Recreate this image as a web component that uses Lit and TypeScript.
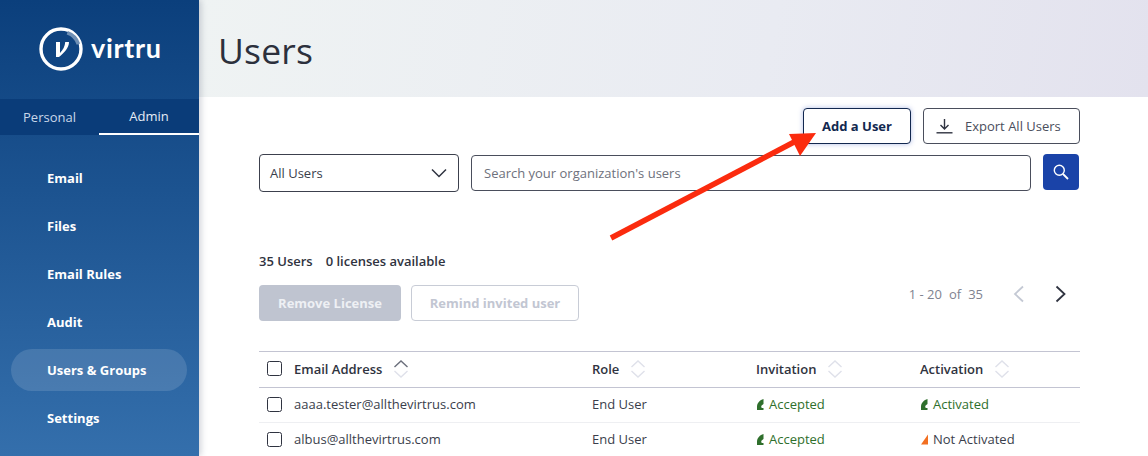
import { LitElement, html, css, svg } from "lit";
import { customElement } from "lit/decorators.js";

const sortIcon = (active = false) => html`<svg class="sort" width="16" height="20" viewBox="0 0 16 20" fill="none">
  <path d="M1.5 8 L8 2 L14.5 8" stroke="${active ? "#6b6f7c" : "#dfe1ea"}" stroke-width="1.4"/>
  <path d="M1.5 12 L8 18 L14.5 12" stroke="#dfe1ea" stroke-width="1.4"/>
</svg>`;

const leaf = html`<svg class="st" width="7" height="11" viewBox="0 0 7 11"><path d="M6.5 0 C3 1 0.3 3.5 0 7.5 L0 11 L6.5 11 L6.5 9 C4.6 9.5 3.6 8 4.6 6.4 L6.5 5 Z" fill="#2f6f2c"/></svg>`;
const warn = html`<svg class="st" width="7" height="11" viewBox="0 0 7 11"><path d="M7 0.5 L7 10.5 L0 10.5 Z" fill="#f26f21"/></svg>`;

const nav = ["Email", "Files", "Email Rules", "Audit", "Users & Groups", "Settings"];
const rows = [
  { email: "aaaa.tester@allthevirtrus.com", ok: true, act: "Activated" },
  { email: "albus@allthevirtrus.com", ok: false, act: "Not Activated" },
];

@customElement("app-root")
export class AppRoot extends LitElement {
  static styles = css`
    :host { display: block; width: 1148px; height: 456px; overflow: hidden; position: relative; background: #fff;
      font-family: "Open Sans", "Noto Sans", sans-serif; color: #2f3340; font-size: 13px; }
    * { box-sizing: border-box; }
    .app { display: flex; height: 456px; }
    .side { width: 199px; flex: none; height: 100%; display: flex; flex-direction: column; color: #fff; position: relative; z-index: 2;
      background: linear-gradient(180deg, #0b3f7c 0%, #346fac 100%); box-shadow: 2px 0 6px rgba(40,50,80,.22); }
    .logo { height: 99px; display: flex; align-items: center; padding: 0 0 1px 39px; gap: 8px; }
    .word { font-family: "Lato", sans-serif; font-weight: 700; font-size: 27px; letter-spacing: .7px; line-height: 1; margin-top: -3px; }
    .tabs { display: flex; height: 36px; background: #0a3c79; }
    .tab { flex: 1; display: flex; align-items: center; justify-content: center; font-size: 13px; color: #c9d8ea; padding-bottom: 1px; }
    .tab.on { color: #e6edf6; border-bottom: 2px solid #fff; }
    .tab:first-child { flex: 0 0 99px; }
    .nav { display: flex; flex-direction: column; padding: 22px 12px 0 11px; gap: 6px; }
    .item { height: 42px; border-radius: 21px; padding-left: 36px; display: flex; align-items: center; font-weight: 700; font-size: 13px; color: #fff; }
    .item.on { background: rgba(255,255,255,.13); }
    .main { flex: 1; min-width: 0; display: flex; flex-direction: column; }
    .head { height: 97px; flex: none; padding: 4px 0 0 19px; display: flex; align-items: center;
      background: linear-gradient(100deg, #eff3f3 0%, #e9ebf2 60%, #e3e2ee 100%); }
    h1 { margin: 0; font-weight: 400; font-size: 35.5px; color: #2c303c; line-height: 1; letter-spacing: .2px; }
    .body { padding: 11px 68px 0 60px; display: flex; flex-direction: column; }
    .actions { display: flex; justify-content: flex-end; gap: 12px; }
    .btn { height: 36px; border-radius: 4px; display: flex; align-items: center; justify-content: center; font-size: 13px; background: #fff; }
    .add { width: 108px; border: 1px solid #12284f; font-weight: 700; color: #12284f; box-shadow: 0 0 5px rgba(60,90,190,.4); }
    .export { width: 157px; border: 1px solid #4a4e5c; color: #4a4e5c; gap: 12px; justify-content: flex-start; padding-left: 12px; }
    .filters { display: flex; margin-top: 10px; align-items: flex-start; }
    .select { width: 200px; height: 38px; border: 1px solid #3c404d; border-radius: 4px; padding: 0 11px 0 10px; display: flex; align-items: center; justify-content: space-between; color: #3a3e4b; }
    .input { width: 560px; height: 36px; margin: 1px 0 0 12px; border: 1px solid #4a4e5c; border-radius: 4px; padding: 0 12px; display: flex; align-items: center; color: #6e717c; }
    .go { width: 36px; height: 36px; margin-left: 12px; background: #1a43a8; border-radius: 4px; display: flex; align-items: center; justify-content: center; }
    .stats { margin-top: 60px; height: 18px; line-height: 18px; display: flex; gap: 13px; font-weight: 600; font-size: 13px; color: #2f3340; }
    .bar { display: flex; justify-content: space-between; margin-top: 15px; }
    .bulk { display: flex; gap: 10px; }
    .rm { width: 142px; background: #bfc4d0; color: #eef0f4; font-weight: 700; }
    .remind { width: 168px; border: 1px solid #c8ccd6; color: #c2c6d2; font-weight: 700; }
    .pager { display: flex; align-items: flex-start; height: 20px; margin-right: 13px; color: #808390; font-size: 13px; }
    .count { margin-right: 30px; line-height: 18px; display: flex; gap: 7px; }
    .pager svg + svg { margin-left: 30px; }
    .table { margin-top: 30px; width: 821px; border-top: 1px solid #c3c4d2; }
    .row { display: grid; grid-template-columns: 35px 298px 164px 164px 1fr; align-items: center; height: 35px; padding-bottom: 2px; border-bottom: 1px solid #eeeff2; color: #3a3e4b; }
    .row.th { height: 36px; border-bottom: 1px solid #c3c4d2; font-weight: 600; color: #2f3340; }
    .cb { width: 15px; height: 15px; border: 1.5px solid #2f3340; border-radius: 2.5px; margin-left: 8px; }
    .h { display: flex; align-items: center; gap: 11px; }
    .s { display: flex; align-items: center; gap: 5px; padding-left: 1px; }
    .s.g { color: #2f6f2c; }
    .arrow { position: absolute; left: 0; top: 0; z-index: 3; pointer-events: none; }
  `;

  render() {
    return html`
      <div class="app">
        <aside class="side">
          <div class="logo">
            <svg width="44" height="44" viewBox="0 0 44 44" fill="none">
              <circle cx="22" cy="22" r="20" stroke="#fff" stroke-width="3.4"/>
              <path d="M28.5 6.2 A18 18 0 0 1 39.6 17.5" stroke="#6f8fb4" stroke-width="3.6" transform="translate(-.2 -.4)"/>
              <path d="M17 15 L17 30 L20 30 C25 26 30 21 30 15 L26.2 15 C26 19 24 23 21 26 L21 15 Z" fill="#fff"/>
            </svg>
            <span class="word">virtru</span>
          </div>
          <div class="tabs"><div class="tab">Personal</div><div class="tab on">Admin</div></div>
          <nav class="nav">
            ${nav.map((n) => html`<div class="item ${n === "Users & Groups" ? "on" : ""}">${n}</div>`)}
          </nav>
        </aside>
        <main class="main">
          <header class="head"><h1>Users</h1></header>
          <section class="body">
            <div class="actions">
              <div class="btn add">Add a User</div>
              <div class="btn export">
                <svg width="17" height="16" viewBox="0 0 17 16" fill="none" stroke="#2f3340" stroke-width="1.4">
                  <path d="M8.5 1 V10.5 M4.5 7 L8.5 11 L12.5 7"/><path d="M0.5 14.8 H16.5"/>
                </svg>
                <span>Export All Users</span>
              </div>
            </div>
            <div class="filters">
              <div class="select"><span>All Users</span>
                <svg width="16" height="10" viewBox="0 0 16 10" fill="none" stroke="#2f3340" stroke-width="1.5"><path d="M1 1.5 L8 8.5 L15 1.5"/></svg>
              </div>
              <div class="input">Search your organization's users</div>
              <div class="go">
                <svg width="16" height="16" viewBox="0 0 16 16" fill="none" stroke="#fff" stroke-width="1.4"><circle cx="6.3" cy="6.3" r="5"/><path d="M10 10 L15 15" stroke-width="1.8"/></svg>
              </div>
            </div>
            <div class="stats"><span>35 Users</span><span>0 licenses available</span></div>
            <div class="bar">
              <div class="bulk">
                <div class="btn rm">Remove License</div>
                <div class="btn remind">Remind invited user</div>
              </div>
              <div class="pager">
                <span class="count"><span>1 - 20</span><span>of</span><span>35</span></span>
                <svg width="12" height="18" viewBox="0 0 12 18" fill="none" stroke="#c4c9d4" stroke-width="1.8"><path d="M10 1.5 L2 9 L10 16.5"/></svg>
                <svg width="12" height="18" viewBox="0 0 12 18" fill="none" stroke="#2f3340" stroke-width="1.8"><path d="M1.5 1.5 L9.5 9 L1.5 16.5"/></svg>
              </div>
            </div>
            <div class="table">
              <div class="row th">
                <div class="cb"></div>
                <div class="h">Email Address ${sortIcon(true)}</div>
                <div class="h">Role ${sortIcon()}</div>
                <div class="h">Invitation ${sortIcon()}</div>
                <div class="h">Activation ${sortIcon()}</div>
              </div>
              ${rows.map((r) => html`<div class="row">
                <div class="cb"></div>
                <div>${r.email}</div>
                <div>End User</div>
                <div class="s g">${leaf}<span>Accepted</span></div>
                <div class="s ${r.ok ? "g" : ""}">${r.ok ? leaf : warn}<span>${r.act}</span></div>
              </div>`)}
            </div>
          </section>
        </main>
      </div>
      <svg class="arrow" width="1148" height="456" viewBox="0 0 1148 456">
        ${svg`<path d="M611 238 L796 141" stroke="#fb2b0e" stroke-width="5.5" fill="none"/>
        <path d="M816 133 L789 134 L800 156 Z" fill="#fb2b0e"/>`}
      </svg>
    `;
  }
}
